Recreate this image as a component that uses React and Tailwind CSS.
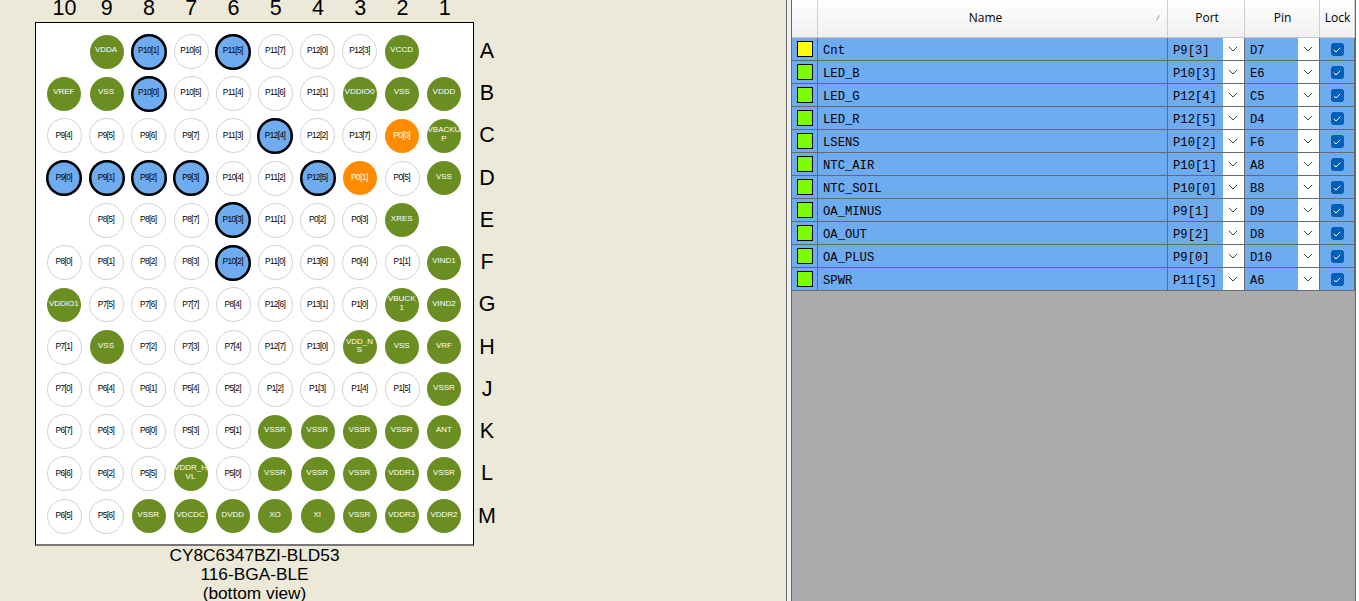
const COLUMNS = ['10', '9', '8', '7', '6', '5', '4', '3', '2', '1'];

const ROWS = [
  ['A', '- VDDA P10[1] P10[6] P11[5] P11[7] P12[0] P12[3] VCCD -'],
  ['B', 'VREF VSS P10[0] P10[5] P11[4] P11[6] P12[1] VDDIO0 VSS VDDD'],
  ['C', 'P9[4] P9[5] P9[6] P9[7] P11[3] P12[4] P12[2] P13[7] P0[0] VBACKU|P'],
  ['D', 'P9[0] P9[1] P9[2] P9[3] P10[4] P11[2] P12[5] P0[1] P0[5] VSS'],
  ['E', '- P8[5] P8[6] P8[7] P10[3] P11[1] P0[2] P0[3] XRES -'],
  ['F', 'P8[0] P8[1] P8[2] P8[3] P10[2] P11[0] P13[6] P0[4] P1[1] VIND1'],
  ['G', 'VDDIO1 P7[5] P7[6] P7[7] P8[4] P12[6] P13[1] P1[0] VBUCK|1 VIND2'],
  ['H', 'P7[1] VSS P7[2] P7[3] P7[4] P12[7] P13[0] VDD_N|S VSS VRF'],
  ['J', 'P7[0] P6[4] P6[1] P5[4] P5[2] P1[2] P1[3] P1[4] P1[5] VSSR'],
  ['K', 'P6[7] P6[3] P6[0] P5[3] P5[1] VSSR VSSR VSSR VSSR ANT'],
  ['L', 'P6[6] P6[2] P5[5] VDDR_H|VL P5[0] VSSR VSSR VSSR VDDR1 VSSR'],
  ['M', 'P6[5] P5[6] VSSR VDCDC DVDD XO XI VSSR VDDR3 VDDR2'],
];

const PINS = [
  ['Cnt', 'P9[3]', 'D7'],
  ['LED_B', 'P10[3]', 'E6'],
  ['LED_G', 'P12[4]', 'C5'],
  ['LED_R', 'P12[5]', 'D4'],
  ['LSENS', 'P10[2]', 'F6'],
  ['NTC_AIR', 'P10[1]', 'A8'],
  ['NTC_SOIL', 'P10[0]', 'B8'],
  ['OA_MINUS', 'P9[1]', 'D9'],
  ['OA_OUT', 'P9[2]', 'D8'],
  ['OA_PLUS', 'P9[0]', 'D10'],
  ['SPWR', 'P11[5]', 'A6'],
];

const ASSIGNED = new Set(PINS.map((pin) => pin[1]));
const RESERVED = new Set(['P0[0]', 'P0[1]']);

function ballStyle(name) {
  if (ASSIGNED.has(name)) return 'size-9 bg-[#6fabef] text-[8.3px] text-black tracking-[-0.6px] shadow-[inset_0_0_0_2.5px_#000]';
  if (RESERVED.has(name)) return 'size-[34px] bg-[#ff8c00] text-[8.3px] text-white tracking-[-0.5px]';
  if (name.startsWith('P')) return 'size-[35px] border border-[#d3d3d3] bg-white text-[8.3px] text-black tracking-[-0.6px]';
  return 'size-[34px] bg-[#6b8e23] text-[8px] text-white';
}

function Ball({ name }) {
  if (name === '-') return <div />;
  const lines = name.split('|');
  return (
    <div className="flex items-center justify-center">
      <div className={`flex shrink-0 flex-col items-center justify-center rounded-full pr-px pb-[2px] leading-[8.5px] whitespace-nowrap ${ballStyle(name)}`}>
        {lines.map((line) => (
          <span key={line}>{line}</span>
        ))}
      </div>
    </div>
  );
}

function Package() {
  return (
    <div className="h-full w-[786px] shrink-0 overflow-hidden bg-[#ece9d8] font-['Liberation_Sans',Arial,sans-serif] text-black">
      <div className="ml-[43.4px] grid h-[22px] w-[422.4px] grid-cols-10 text-center text-[21.5px] leading-[17px]">
        {COLUMNS.map((column) => (
          <span key={column}>{column}</span>
        ))}
      </div>
      <div className="ml-[35px] flex h-[523px]">
        <div className="h-[524px] w-[439px] border border-b-2 border-black border-b-[#777] bg-white pt-[7.4px] pl-[7.2px]">
          <div className="grid h-[506.8px] w-[422.4px] grid-cols-10 grid-rows-12">
            {ROWS.map(([letter, names]) =>
              names.split(' ').map((name, index) => <Ball key={`${letter}${index}`} name={name} />),
            )}
          </div>
        </div>
        <div className="mt-[8px] grid h-[506.8px] w-[26px] grid-rows-12 text-center text-[21.5px]">
          {ROWS.map(([letter]) => (
            <span key={letter} className="leading-[43px]">{letter}</span>
          ))}
        </div>
      </div>
      <div className="ml-[35px] w-[439px] pt-px text-center text-[17.3px] leading-[19px]">
        <div>CY8C6347BZI-BLD53</div>
        <div>116-BGA-BLE</div>
        <div>(bottom view)</div>
      </div>
    </div>
  );
}

function DropButton() {
  return (
    <div className="flex h-[22px] w-[21px] items-center justify-center bg-white pr-px">
      <svg width="10" height="6" viewBox="0 0 10 6" className="mb-px fill-none stroke-[#444]">
        <path d="M0.8 0.8 5 5 9.2 0.8" />
      </svg>
    </div>
  );
}

function Lock() {
  return (
    <div className="flex justify-center border-r border-[#696969] pt-[5px]">
      <div className="flex size-[13px] items-center justify-center rounded-[3px] bg-[#005fb8]">
        <svg width="8" height="6" viewBox="0 0 8 6" className="fill-none stroke-white">
          <path d="M0.8 2.9 3 5 7.2 0.8" />
        </svg>
      </div>
    </div>
  );
}

const TRACKS = 'grid grid-cols-[26px_350px_77px_75px_35px]';

function PinTable() {
  return (
    <div className="h-full w-[565px] shrink-0 border-x border-x-[#696969] bg-[#ababab] text-black">
      <div className={`${TRACKS} h-[38px] border-b border-[#c4c4c4] bg-linear-to-b from-white to-[#f0f0f0] text-center font-['Open_Sans','Noto_Sans',sans-serif] text-[12px] leading-[36px]`}>
        <div className="border-r border-[#d0d0d0]" />
        <div className="relative border-r border-[#d0d0d0] pr-[14px]">
          Name
          <svg width="7" height="8" viewBox="0 0 7 8" className="absolute top-[14px] right-[4px] fill-none">
            <path d="M0.5 7 3.6 0.5" stroke="#999" />
            <path d="M3.6 0.5 6.5 7H0.5" stroke="#fff" />
          </svg>
        </div>
        <div className="border-r border-[#d0d0d0] pl-[2px]">Port</div>
        <div className="border-r border-[#d0d0d0] pl-px">Pin</div>
        <div className="border-r border-[#d0d0d0] pl-px">Lock</div>
      </div>
      {PINS.map(([name, port, pin]) => (
        <div key={name} className={`${TRACKS} h-[23px] border-b border-[#696969] bg-[#6fabef] font-['Courier_New','Liberation_Mono',monospace] text-[12.2px] leading-[26px]`}>
          <div className="h-[22px] border-r border-[#696969] pt-[3px] pl-[5px]">
            <div className={`size-4 border border-black ${name === 'Cnt' ? 'bg-[#ffff00]' : 'bg-[#7cfc00]'}`} />
          </div>
          <div className="h-[22px] border-r border-[#696969] pl-[5px]">{name}</div>
          <div className="flex h-[22px] justify-between border-r border-[#696969] pl-[5px]">
            {port}
            <DropButton />
          </div>
          <div className="flex h-[22px] justify-between border-r border-[#696969] pl-[5px]">
            {pin}
            <DropButton />
          </div>
          <Lock />
        </div>
      ))}
    </div>
  );
}

export default function App() {
  return (
    <div className="flex h-[601px] w-[1359px] overflow-hidden bg-white">
      <Package />
      <div className="h-full w-[5px] shrink-0 border-l border-[#696969] bg-[#f0f0f0]" />
      <PinTable />
    </div>
  );
}
